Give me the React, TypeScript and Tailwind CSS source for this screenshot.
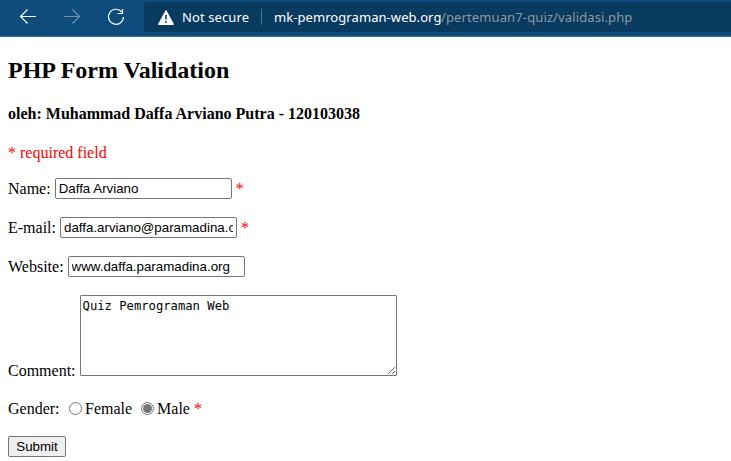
import type { ReactNode } from "react";

const Required = () => <span className="text-[#ff0000]">*</span>;

function Field({ label, value, required }: { label: string; value: string; required?: boolean }) {
  return (
    <div className="mb-[18px] flex h-[21px] items-center gap-1">
      <label className="leading-[18px]">{label}</label>
      <input
        type="text"
        defaultValue={value}
        className="h-[21px] w-[177px] rounded-[2px] border border-[#767676] bg-white px-[3px] font-['Liberation_Sans',Arial,sans-serif] text-[13.333px] leading-[15px] outline-none"
      />
      {required && <Required />}
    </div>
  );
}

function Radio({ checked, children }: { checked?: boolean; children: ReactNode }) {
  return (
    <label className="flex items-center gap-[3px]">
      <span className="mt-[-2px] flex h-[13px] w-[13px] items-center justify-center rounded-full border border-[#767676] bg-white">
        {checked && <span className="h-[9px] w-[9px] rounded-full bg-[#767676]" />}
      </span>
      <span>{children}</span>
    </label>
  );
}

export default function App() {
  return (
    <div className="h-[461px] w-[731px] overflow-hidden bg-white font-['Liberation_Serif','Times_New_Roman',serif] text-[16px] leading-[18px] text-black">
      <header className="flex h-[37px] border-b border-[#37709c] bg-[#0d4c7c]">
        <svg width="144" height="36" viewBox="0 0 144 36" fill="none" strokeWidth="1.2" className="shrink-0">
          <path d="M36 16.5H20.5M27.5 9.5l-7 7 7 7" stroke="#fff" />
          <path d="M64 16.5h15.5M72.500 9.500l7 7-7 7" stroke="#6e94b0" />
          <path d="M121.800 12A7.500 7.500 0 1 0 123.500 17M122.500 9v4.500H117.500" stroke="#fff" />
        </svg>
        <div className="mt-[2px] flex h-[30px] flex-1 items-center rounded-l-[4px] bg-[#093a5f] pl-[14px] font-['Noto_Sans','Open_Sans',sans-serif] text-[13px] leading-[18px]">
          <svg width="16" height="15" viewBox="0 0 16 15" className="mr-2 shrink-0">
            <path d="M8 .8 15.300 14.300H.7Z" fill="#fff" stroke="#fff" strokeWidth="1.200" strokeLinejoin="round" />
            <path d="M8 5v4.500M8 11v1.700" stroke="#093a5f" strokeWidth="1.600" />
          </svg>
          <span className="w-[79px] whitespace-nowrap tracking-[0.1px] text-white">Not secure</span>
          <span className="mr-[12px] h-4 w-px bg-[#537590]" />
          <span className="w-[167px] whitespace-nowrap tracking-[0.07px] text-white">mk-pemrograman-web.org</span>
          <span className="whitespace-nowrap tracking-[0.12px] text-[#8c989f]">/pertemuan7-quiz/validasi.php</span>
        </div>
      </header>
      <main className="px-2 pt-[20px]">
        <h2 className="mb-[21px] h-[27px] text-[24px] leading-[27px] font-bold">PHP Form Validation</h2>
        <h4 className="mb-[21px] h-[18px] font-bold">oleh: Muhammad Daffa Arviano Putra - 120103038</h4>
        <p className="mb-[16px] h-[18px] text-[#ff0000]">* required field</p>
        <form>
          <Field label="Name:" value="Daffa Arviano" required />
          <Field label="E-mail:" value="daffa.arviano@paramadina.org" required />
          <Field label="Website:" value="www.daffa.paramadina.org" />
          <div className="mb-[24px] flex h-[81px] items-end gap-1">
            <label className="mb-[-4px]">Comment:</label>
            <textarea
              defaultValue="Quiz Pemrograman Web"
              spellCheck={false}
              className="h-[81px] w-[317px] resize rounded-[1px] border border-[#767676] bg-white px-[2px] pt-[3px] font-['DejaVu_Sans_Mono',monospace] text-[12.200px] leading-[15px] outline-none"
            />
          </div>
          <div className="mb-[18px] flex h-[18px] items-center">
            <span className="w-[61px]">Gender:</span>
            <Radio>Female</Radio>
            <span className="w-[9px]" />
            <Radio checked>Male</Radio>
            <span className="w-1" />
            <Required />
          </div>
          <button type="button" className="flex h-[21px] w-[58px] items-center justify-center rounded-[2px] border border-[#767676] bg-[#efefef] font-['Liberation_Sans',Arial,sans-serif] text-[13.333px] leading-[15px]">
            Submit
          </button>
        </form>
      </main>
    </div>
  );
}
